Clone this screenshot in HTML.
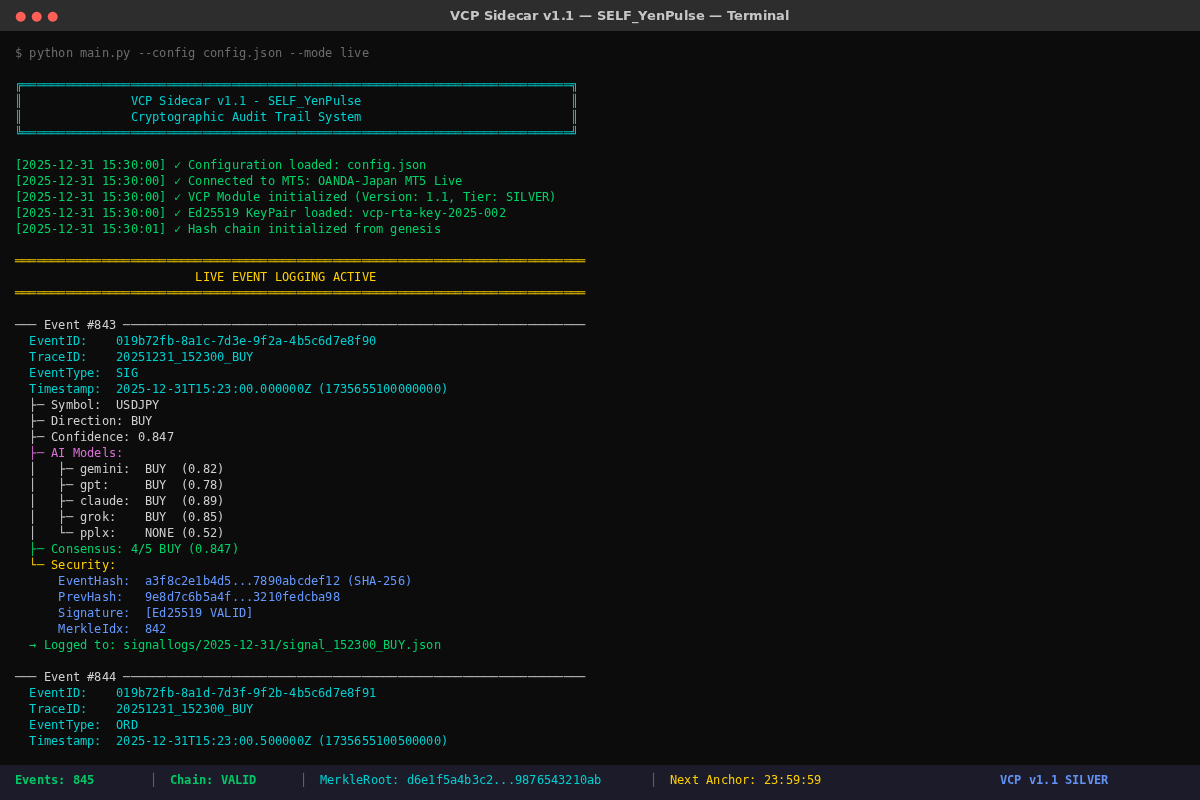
<!DOCTYPE html>
<html lang="en"><head><meta charset="utf-8"><title>VCP Sidecar v1.1 — SELF_YenPulse — Terminal</title>
<style>
html,body{margin:0;padding:0;background:#0c0c0c}
body{width:1200px;height:800px;overflow:hidden;position:relative}
#titlebar{position:absolute;left:0;top:0;width:1200px;height:31px;background:#2d2d2d}
#statusbar{position:absolute;left:0;top:765px;width:1200px;height:35px;background:#1c1b2a}
#screen{position:absolute;left:0;top:0;width:1200px;height:800px;will-change:transform}
text{font-family:"DejaVu Sans Mono","Liberation Mono",monospace;font-size:12px;white-space:pre}
.ui{font-family:"DejaVu Sans","Liberation Sans",sans-serif;font-size:13px;font-weight:bold}
.bd{font-weight:bold}
.hl{fill-opacity:0.92}
.gr.bd{fill:#02c766}.b.bd{fill:#6292f3}
.g{fill:#6c6c6c}.c{fill:#00d0d0}.gr{fill:#00d26a}.y{fill:#ffd000}.m{fill:#da70d6}.b{fill:#6699ff}.w{fill:#d0d0d0}
</style></head><body>
<div id="titlebar"></div>
<div id="statusbar"></div>
<svg id="screen" xml:space="preserve" width="1200" height="800" viewBox="0 0 1200 800">
<g id="window-controls"><text class="ui" x="15 26 31 42 47" y="20" fill="#ff5f57">● ● ●</text></g>
<g id="window-title"><text class="ui" x="450 460 470 479 484 493 497 507 516 523 532 538 543 551 561 565 575 579 592 597 606 615 623 632 638 647 656 665 674 684 688 696 705 709 722 727 734 743 749 763 767 776 785" y="20" fill="#c7c7c7">VCP Sidecar v1.1 — SELF_YenPulse — Terminal</text></g>
<g id="terminal-output">
<text class="g" y="57"><tspan x="15">$</tspan> <tspan x="29 37 44 51 58 66">python</tspan> <tspan x="80 87 94 102 109 116 123">main.py</tspan> <tspan x="138 145 152 159 167 174 181 188">--config</tspan> <tspan x="203 210 217 224 232 239 246 253 260 268 275">config.json</tspan> <tspan x="289 297 304 311 318 325">--mode</tspan> <tspan x="340 347 354 362">live</tspan></text>
<text class="c" y="89"><tspan x="15">╔</tspan><tspan class="hl" x="22 29 37 44 51 58 66 73 80 87 94 102 109 116 123 131 138 145 152 159 167 174 181 188 195 203 210 217 224 232 239 246 253 260 268 275 282 289 297 304 311 318 325 333 340 347 354 362 369 376 383 390 398 405 412 419 426 434 441 448 455 463 470 477 484 491 499 506 513 520 528 535 542 549 556 564">════════════════════════════════════════════════════════════════════════════</tspan><tspan x="571">╗</tspan></text>
<text class="c" y="105"><tspan x="15">║</tspan>               <tspan x="131 138 145">VCP</tspan> <tspan x="159 167 174 181 188 195 203">Sidecar</tspan> <tspan x="217 224 232 239">v1.1</tspan> <tspan x="253">-</tspan> <tspan x="268 275 282 289 297 304 311 318 325 333 340 347 354">SELF_YenPulse</tspan>                             <tspan x="571">║</tspan></text>
<text class="c" y="121"><tspan x="15">║</tspan>               <tspan x="131 138 145 152 159 167 174 181 188 195 203 210 217">Cryptographic</tspan> <tspan x="232 239 246 253 260">Audit</tspan> <tspan x="275 282 289 297 304">Trail</tspan> <tspan x="318 325 333 340 347 354">System</tspan>                             <tspan x="571">║</tspan></text>
<text class="c" y="137"><tspan x="15">╚</tspan><tspan class="hl" x="22 29 37 44 51 58 66 73 80 87 94 102 109 116 123 131 138 145 152 159 167 174 181 188 195 203 210 217 224 232 239 246 253 260 268 275 282 289 297 304 311 318 325 333 340 347 354 362 369 376 383 390 398 405 412 419 426 434 441 448 455 463 470 477 484 491 499 506 513 520 528 535 542 549 556 564">════════════════════════════════════════════════════════════════════════════</tspan><tspan x="571">╝</tspan></text>
<text class="gr" y="169"><tspan x="15 22 29 37 44 51 58 66 73 80 87">[2025-12-31</tspan> <tspan x="102 109 116 123 131 138 145 152 159">15:30:00]</tspan> <tspan x="174">✓</tspan> <tspan x="188 195 203 210 217 224 232 239 246 253 260 268 275">Configuration</tspan> <tspan x="289 297 304 311 318 325 333">loaded:</tspan> <tspan x="347 354 362 369 376 383 390 398 405 412 419">config.json</tspan></text>
<text class="gr" y="185"><tspan x="15 22 29 37 44 51 58 66 73 80 87">[2025-12-31</tspan> <tspan x="102 109 116 123 131 138 145 152 159">15:30:00]</tspan> <tspan x="174">✓</tspan> <tspan x="188 195 203 210 217 224 232 239 246">Connected</tspan> <tspan x="260 268">to</tspan> <tspan x="282 289 297 304">MT5:</tspan> <tspan x="318 325 333 340 347 354 362 369 376 383 390">OANDA-Japan</tspan> <tspan x="405 412 419">MT5</tspan> <tspan x="434 441 448 455">Live</tspan></text>
<text class="gr" y="201"><tspan x="15 22 29 37 44 51 58 66 73 80 87">[2025-12-31</tspan> <tspan x="102 109 116 123 131 138 145 152 159">15:30:00]</tspan> <tspan x="174">✓</tspan> <tspan x="188 195 203">VCP</tspan> <tspan x="217 224 232 239 246 253">Module</tspan> <tspan x="268 275 282 289 297 304 311 318 325 333 340">initialized</tspan> <tspan x="354 362 369 376 383 390 398 405 412">(Version:</tspan> <tspan x="426 434 441 448">1.1,</tspan> <tspan x="463 470 477 484 491">Tier:</tspan> <tspan x="506 513 520 528 535 542 549">SILVER)</tspan></text>
<text class="gr" y="217"><tspan x="15 22 29 37 44 51 58 66 73 80 87">[2025-12-31</tspan> <tspan x="102 109 116 123 131 138 145 152 159">15:30:00]</tspan> <tspan x="174">✓</tspan> <tspan x="188 195 203 210 217 224 232">Ed25519</tspan> <tspan x="246 253 260 268 275 282 289">KeyPair</tspan> <tspan x="304 311 318 325 333 340 347">loaded:</tspan> <tspan x="362 369 376 383 390 398 405 412 419 426 434 441 448 455 463 470 477 484 491 499">vcp-rta-key-2025-002</tspan></text>
<text class="gr" y="233"><tspan x="15 22 29 37 44 51 58 66 73 80 87">[2025-12-31</tspan> <tspan x="102 109 116 123 131 138 145 152 159">15:30:01]</tspan> <tspan x="174">✓</tspan> <tspan x="188 195 203 210">Hash</tspan> <tspan x="224 232 239 246 253">chain</tspan> <tspan x="268 275 282 289 297 304 311 318 325 333 340">initialized</tspan> <tspan x="354 362 369 376">from</tspan> <tspan x="390 398 405 412 419 426 434">genesis</tspan></text>
<text class="y" y="265"><tspan class="hl" x="15 22 29 37 44 51 58 66 73 80 87 94 102 109 116 123 131 138 145 152 159 167 174 181 188 195 203 210 217 224 232 239 246 253 260 268 275 282 289 297 304 311 318 325 333 340 347 354 362 369 376 383 390 398 405 412 419 426 434 441 448 455 463 470 477 484 491 499 506 513 520 528 535 542 549 556 564 571 578">═══════════════════════════════════════════════════════════════════════════════</tspan></text>
<text class="y" y="281"><tspan x="195 203 210 217">LIVE</tspan> <tspan x="232 239 246 253 260">EVENT</tspan> <tspan x="275 282 289 297 304 311 318">LOGGING</tspan> <tspan x="333 340 347 354 362 369">ACTIVE</tspan></text>
<text class="y" y="297"><tspan class="hl" x="15 22 29 37 44 51 58 66 73 80 87 94 102 109 116 123 131 138 145 152 159 167 174 181 188 195 203 210 217 224 232 239 246 253 260 268 275 282 289 297 304 311 318 325 333 340 347 354 362 369 376 383 390 398 405 412 419 426 434 441 448 455 463 470 477 484 491 499 506 513 520 528 535 542 549 556 564 571 578">═══════════════════════════════════════════════════════════════════════════════</tspan></text>
<text class="w" y="329"><tspan class="hl" x="15 22 29">───</tspan> <tspan x="44 51 58 66 73">Event</tspan> <tspan x="87 94 102 109">#843</tspan> <tspan class="hl" x="123 131 138 145 152 159 167 174 181 188 195 203 210 217 224 232 239 246 253 260 268 275 282 289 297 304 311 318 325 333 340 347 354 362 369 376 383 390 398 405 412 419 426 434 441 448 455 463 470 477 484 491 499 506 513 520 528 535 542 549 556 564 571 578">────────────────────────────────────────────────────────────────</tspan></text>
<text class="c" y="345"><tspan x="29 37 44 51 58 66 73 80">EventID:</tspan>    <tspan x="116 123 131 138 145 152 159 167 174 181 188 195 203 210 217 224 232 239 246 253 260 268 275 282 289 297 304 311 318 325 333 340 347 354 362 369">019b72fb-8a1c-7d3e-9f2a-4b5c6d7e8f90</tspan></text>
<text class="c" y="361"><tspan x="29 37 44 51 58 66 73 80">TraceID:</tspan>    <tspan x="116 123 131 138 145 152 159 167 174 181 188 195 203 210 217 224 232 239 246">20251231_152300_BUY</tspan></text>
<text class="c" y="377"><tspan x="29 37 44 51 58 66 73 80 87 94">EventType:</tspan>  <tspan x="116 123 131">SIG</tspan></text>
<text class="c" y="393"><tspan x="29 37 44 51 58 66 73 80 87 94">Timestamp:</tspan>  <tspan x="116 123 131 138 145 152 159 167 174 181 188 195 203 210 217 224 232 239 246 253 260 268 275 282 289 297 304">2025-12-31T15:23:00.000000Z</tspan> <tspan x="318 325 333 340 347 354 362 369 376 383 390 398 405 412 419 426 434 441">(1735655100000000)</tspan></text>
<text class="w" y="409"><tspan x="29">├</tspan><tspan class="hl" x="37">─</tspan> <tspan x="51 58 66 73 80 87 94">Symbol:</tspan>  <tspan x="116 123 131 138 145 152">USDJPY</tspan></text>
<text class="w" y="425"><tspan x="29">├</tspan><tspan class="hl" x="37">─</tspan> <tspan x="51 58 66 73 80 87 94 102 109 116">Direction:</tspan> <tspan x="131 138 145">BUY</tspan></text>
<text class="w" y="441"><tspan x="29">├</tspan><tspan class="hl" x="37">─</tspan> <tspan x="51 58 66 73 80 87 94 102 109 116 123">Confidence:</tspan> <tspan x="138 145 152 159 167">0.847</tspan></text>
<text class="m" y="457"><tspan x="29">├</tspan><tspan class="hl" x="37">─</tspan> <tspan x="51 58">AI</tspan> <tspan x="73 80 87 94 102 109 116">Models:</tspan></text>
<text class="w" y="473"><tspan x="29">│</tspan>   <tspan x="58">├</tspan><tspan class="hl" x="66">─</tspan> <tspan x="80 87 94 102 109 116 123">gemini:</tspan>  <tspan x="145 152 159">BUY</tspan>  <tspan x="181 188 195 203 210 217">(0.82)</tspan></text>
<text class="w" y="489"><tspan x="29">│</tspan>   <tspan x="58">├</tspan><tspan class="hl" x="66">─</tspan> <tspan x="80 87 94 102">gpt:</tspan>     <tspan x="145 152 159">BUY</tspan>  <tspan x="181 188 195 203 210 217">(0.78)</tspan></text>
<text class="w" y="505"><tspan x="29">│</tspan>   <tspan x="58">├</tspan><tspan class="hl" x="66">─</tspan> <tspan x="80 87 94 102 109 116 123">claude:</tspan>  <tspan x="145 152 159">BUY</tspan>  <tspan x="181 188 195 203 210 217">(0.89)</tspan></text>
<text class="w" y="521"><tspan x="29">│</tspan>   <tspan x="58">├</tspan><tspan class="hl" x="66">─</tspan> <tspan x="80 87 94 102 109">grok:</tspan>    <tspan x="145 152 159">BUY</tspan>  <tspan x="181 188 195 203 210 217">(0.85)</tspan></text>
<text class="w" y="537"><tspan x="29">│</tspan>   <tspan x="58">└</tspan><tspan class="hl" x="66">─</tspan> <tspan x="80 87 94 102 109">pplx:</tspan>    <tspan x="145 152 159 167">NONE</tspan> <tspan x="181 188 195 203 210 217">(0.52)</tspan></text>
<text class="gr" y="553"><tspan x="29">├</tspan><tspan class="hl" x="37">─</tspan> <tspan x="51 58 66 73 80 87 94 102 109 116">Consensus:</tspan> <tspan x="131 138 145">4/5</tspan> <tspan x="159 167 174">BUY</tspan> <tspan x="188 195 203 210 217 224 232">(0.847)</tspan></text>
<text class="y" y="569"><tspan x="29">└</tspan><tspan class="hl" x="37">─</tspan> <tspan x="51 58 66 73 80 87 94 102 109">Security:</tspan></text>
<text class="b" y="585"><tspan x="58 66 73 80 87 94 102 109 116 123">EventHash:</tspan>  <tspan x="145 152 159 167 174 181 188 195 203 210 217 224 232 239 246 253 260 268 275 282 289 297 304 311 318 325 333">a3f8c2e1b4d5...7890abcdef12</tspan> <tspan x="347 354 362 369 376 383 390 398 405">(SHA-256)</tspan></text>
<text class="b" y="601"><tspan x="58 66 73 80 87 94 102 109 116">PrevHash:</tspan>   <tspan x="145 152 159 167 174 181 188 195 203 210 217 224 232 239 246 253 260 268 275 282 289 297 304 311 318 325 333">9e8d7c6b5a4f...3210fedcba98</tspan></text>
<text class="b" y="617"><tspan x="58 66 73 80 87 94 102 109 116 123">Signature:</tspan>  <tspan x="145 152 159 167 174 181 188 195">[Ed25519</tspan> <tspan x="210 217 224 232 239 246">VALID]</tspan></text>
<text class="b" y="633"><tspan x="58 66 73 80 87 94 102 109 116 123">MerkleIdx:</tspan>  <tspan x="145 152 159">842</tspan></text>
<text class="gr" y="649"><tspan x="29">→</tspan> <tspan x="44 51 58 66 73 80">Logged</tspan> <tspan x="94 102 109">to:</tspan> <tspan x="123 131 138 145 152 159 167 174 181 188 195 203 210 217 224 232 239 246 253 260 268 275 282 289 297 304 311 318 325 333 340 347 354 362 369 376 383 390 398 405 412 419 426 434">signallogs/2025-12-31/signal_152300_BUY.json</tspan></text>
<text class="w" y="681"><tspan class="hl" x="15 22 29">───</tspan> <tspan x="44 51 58 66 73">Event</tspan> <tspan x="87 94 102 109">#844</tspan> <tspan class="hl" x="123 131 138 145 152 159 167 174 181 188 195 203 210 217 224 232 239 246 253 260 268 275 282 289 297 304 311 318 325 333 340 347 354 362 369 376 383 390 398 405 412 419 426 434 441 448 455 463 470 477 484 491 499 506 513 520 528 535 542 549 556 564 571 578">────────────────────────────────────────────────────────────────</tspan></text>
<text class="c" y="697"><tspan x="29 37 44 51 58 66 73 80">EventID:</tspan>    <tspan x="116 123 131 138 145 152 159 167 174 181 188 195 203 210 217 224 232 239 246 253 260 268 275 282 289 297 304 311 318 325 333 340 347 354 362 369">019b72fb-8a1d-7d3f-9f2b-4b5c6d7e8f91</tspan></text>
<text class="c" y="713"><tspan x="29 37 44 51 58 66 73 80">TraceID:</tspan>    <tspan x="116 123 131 138 145 152 159 167 174 181 188 195 203 210 217 224 232 239 246">20251231_152300_BUY</tspan></text>
<text class="c" y="729"><tspan x="29 37 44 51 58 66 73 80 87 94">EventType:</tspan>  <tspan x="116 123 131">ORD</tspan></text>
<text class="c" y="745"><tspan x="29 37 44 51 58 66 73 80 87 94">Timestamp:</tspan>  <tspan x="116 123 131 138 145 152 159 167 174 181 188 195 203 210 217 224 232 239 246 253 260 268 275 282 289 297 304">2025-12-31T15:23:00.500000Z</tspan> <tspan x="318 325 333 340 347 354 362 369 376 383 390 398 405 412 419 426 434 441">(1735655100500000)</tspan></text>
</g>
<g id="status-items">
<text class="gr bd" y="784"><tspan x="15 22 29 37 44 51 58">Events:</tspan> <tspan x="73 80 87">845</tspan></text>
<text class="g" y="784"><tspan x="150">│</tspan></text>
<text class="gr bd" y="784"><tspan x="170 177 184 192 199 206">Chain:</tspan> <tspan x="221 228 235 242 249">VALID</tspan></text>
<text class="g" y="784"><tspan x="300">│</tspan></text>
<text class="c" y="784"><tspan x="320 327 334 342 349 356 363 371 378 385 392">MerkleRoot:</tspan> <tspan x="407 414 421 428 436 443 450 457 464 472 479 486 493 500 508 515 522 529 537 544 551 558 565 573 580 587 594">d6e1f5a4b3c2...9876543210ab</tspan></text>
<text class="g" y="784"><tspan x="650">│</tspan></text>
<text class="y" y="784"><tspan x="670 677 684 692">Next</tspan> <tspan x="706 713 721 728 735 742 749">Anchor:</tspan> <tspan x="764 771 778 786 793 800 807 814">23:59:59</tspan></text>
<text class="b bd" y="784"><tspan x="1000 1007 1014">VCP</tspan> <tspan x="1029 1036 1043 1051">v1.1</tspan> <tspan x="1065 1072 1079 1087 1094 1101">SILVER</tspan></text>
</g>
</svg>
</body></html>
